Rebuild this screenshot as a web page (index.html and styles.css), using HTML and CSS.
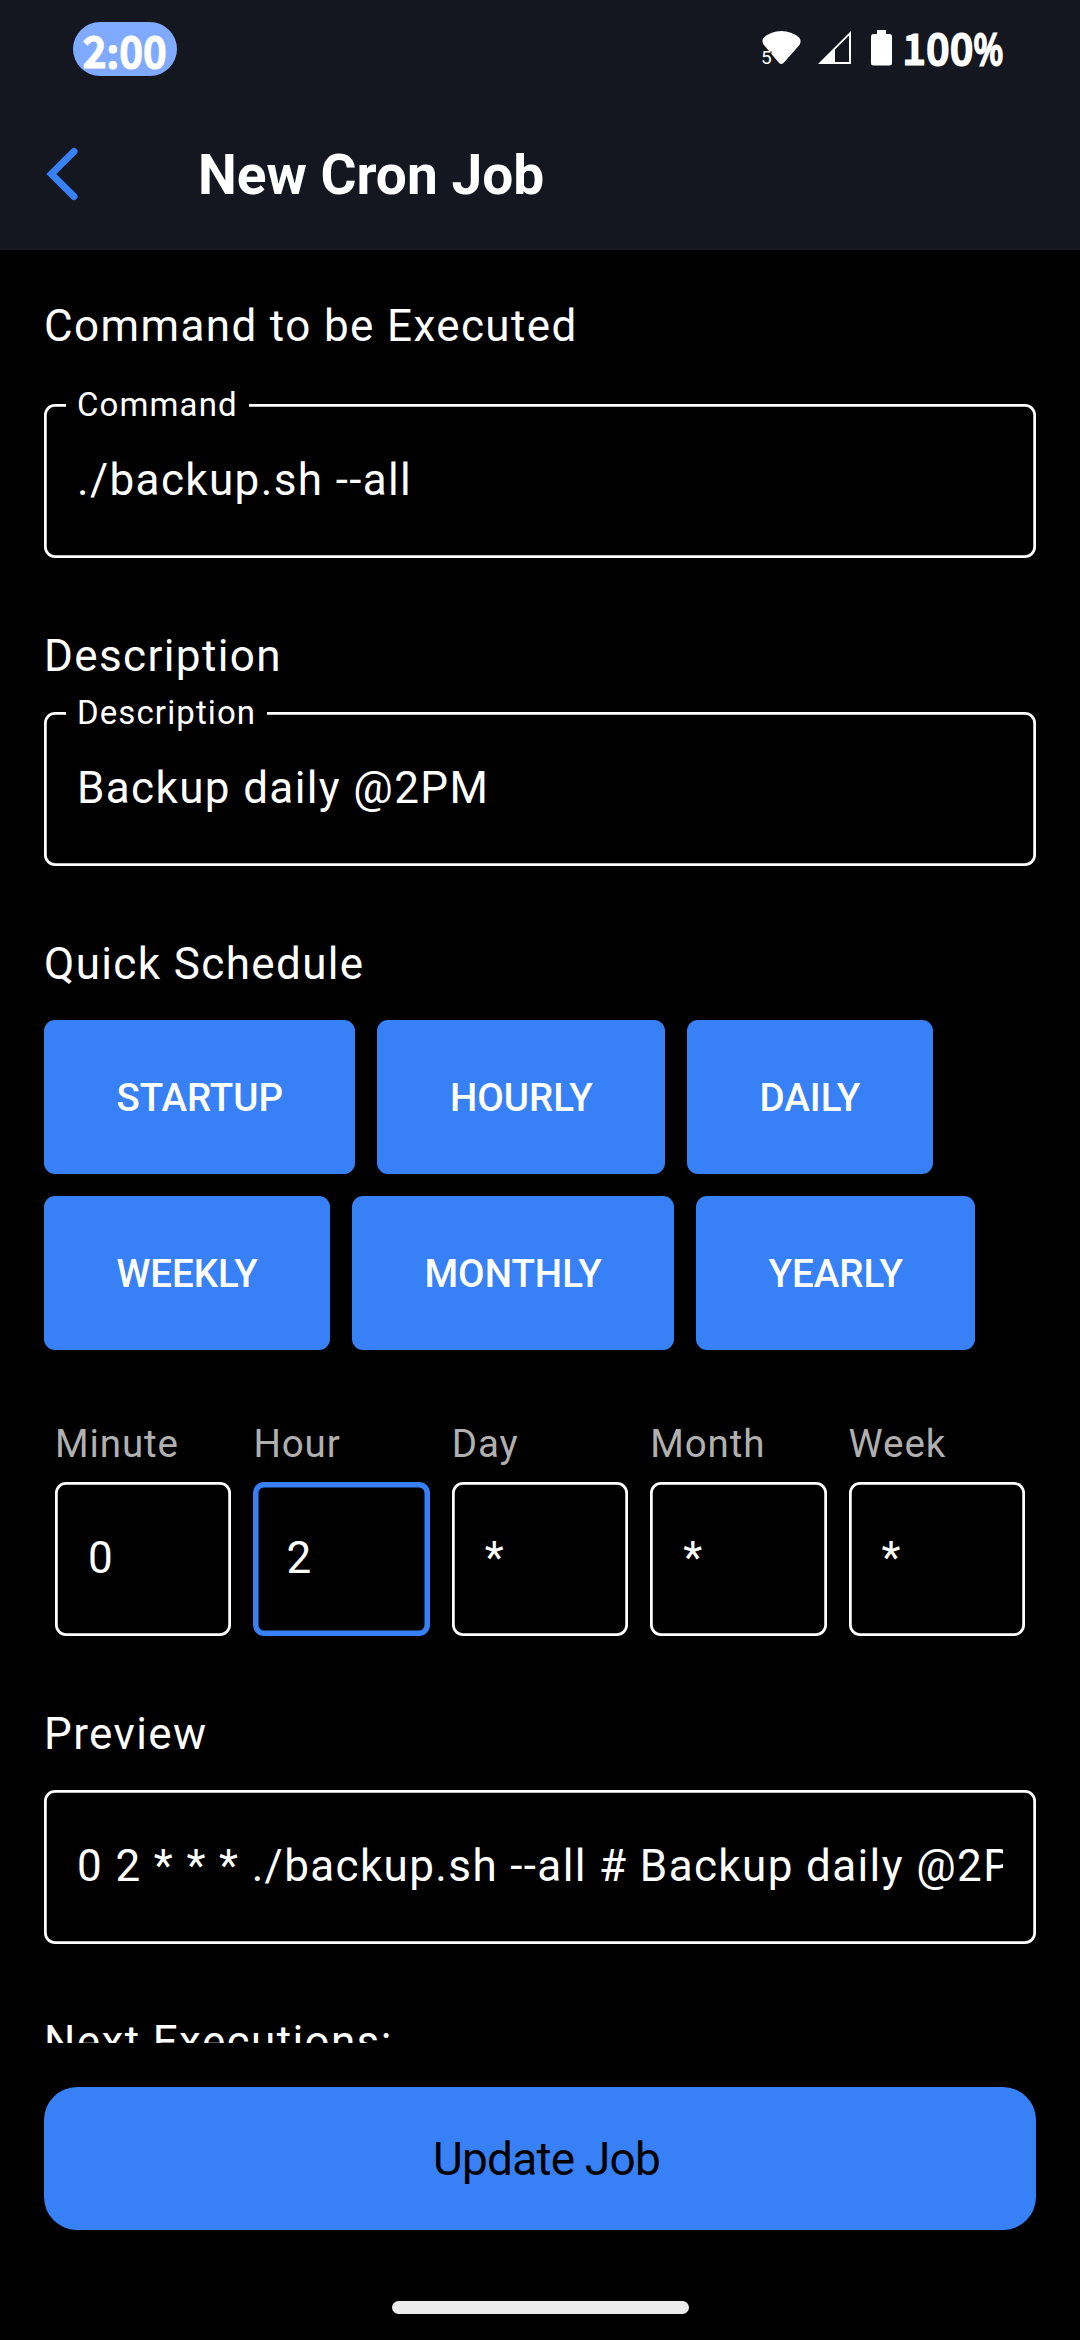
FILE: index.html
```html
<!DOCTYPE html>
<html lang="en">
<head>
<meta charset="utf-8">
<title>New Cron Job</title>
<link rel="stylesheet" href="styles.css">
</head>
<body>
<div class="screen">
  <header class="top">
    <div class="status">
      <div class="clock"><span>2:00</span></div>
      <div class="status-right">
        <svg class="wifi" width="40" height="36" viewBox="0 0 40 36">
          <path d="M1.500 12V10.500Q1.500 9 3 7.500Q10 1 20.300 1T38 7.500Q39.500 9 39.500 10.500V12Q39.200 14 38 15.500L22.500 33Q20.300 35 18.100 33L10.500 24V21H8L2.500 14.500Z" fill="#fff"/>
          <text class="wifi-gen" x="0" y="34">5</text>
        </svg>
        <svg class="signal" width="34" height="34" viewBox="0 0 34 34">
          <path d="M33 0V33H0Z M31 4.500L17 18.500V31H31Z" fill="#fff" fill-rule="evenodd"/>
        </svg>
        <svg class="battery" width="21" height="36" viewBox="0 0 21 36">
          <path d="M6 0H15V4H18.500Q21 4 21 6.500V33Q21 35.500 18.500 35.500H2.500Q0 35.500 0 33V6.500Q0 4 2.500 4H6Z" fill="#fff"/>
        </svg>
        <span class="percent">100<span class="sign">%</span></span>
      </div>
    </div>
    <div class="titlebar">
      <svg class="back" width="34" height="54" viewBox="0 0 34 54">
        <path d="M30 4.500L7.300 27L30 49.500" fill="none" stroke="#3880f6" stroke-width="7" stroke-linecap="round" stroke-linejoin="miter"/>
      </svg>
      <h1>New Cron Job</h1>
    </div>
  </header>

  <main class="content">
    <section class="group command">
      <h2>Command to be Executed</h2>
      <div class="field"><span class="legend">Command</span><div class="value">./backup.sh --all</div></div>
    </section>
    <section class="group description">
      <h2>Description</h2>
      <div class="field"><span class="legend">Description</span><div class="value">Backup daily @2PM</div></div>
    </section>
    <section class="group">
      <h2>Quick Schedule</h2>
      <div class="chips">
        <button>STARTUP</button><button>HOURLY</button><button>DAILY</button>
        <button>WEEKLY</button><button>MONTHLY</button><button>YEARLY</button>
      </div>
    </section>
    <section class="times">
      <label>Minute<span class="field"><span class="value">0</span></span></label>
      <label>Hour<span class="field focused"><span class="value">2</span></span></label>
      <label>Day<span class="field"><span class="value">*</span></span></label>
      <label>Month<span class="field"><span class="value">*</span></span></label>
      <label>Week<span class="field"><span class="value">*</span></span></label>
    </section>
    <section class="group preview">
      <h2>Preview</h2>
      <div class="field"><div class="value">0 2 * * * ./backup.sh --all # Backup daily @2PM</div></div>
    </section>
    <h2>Next Executions:</h2>
  </main>

  <footer>
    <button class="submit">Update Job</button>
    <div class="home"></div>
  </footer>
</div>
</body>
</html>
```
FILE: styles.css
```css
* { box-sizing: border-box; }
body { margin: 0; background: #000; font-family: Roboto, sans-serif; color: #fff; }
h1, h2 { margin: 0; }
button { border: 0; font-family: inherit; padding: 0; }
svg { display: block; flex: none; overflow: visible; }
.screen { width: 1080px; height: 2340px; display: flex; flex-direction: column; overflow: hidden; }

.top { height: 250px; background: #14171f; flex: none; }
.status { height: 96px; padding: 0 77px 0 73px; display: flex; justify-content: space-between; align-items: center; }
.clock { width: 104px; height: 54px; margin-top: 2px; border-radius: 27px; background: #80aaff; display: flex; align-items: center; justify-content: center; }
.clock span, .percent { font-family: "Noto Sans CJK JP", sans-serif; font-weight: 400; font-size: 40px; line-height: 54px; letter-spacing: 1.6px; -webkit-text-stroke: 3px #fff; white-space: nowrap; }
.clock > span { padding: 2px 0 0 1px; }
.status-right { display: flex; align-items: center; height: 54px; }
.signal { margin-left: 17px; }
.battery { margin-left: 19px; }
.percent { margin-left: 11px; width: 100px; display: flex; padding-bottom: 2px; }
.percent .sign { transform: scaleX(.78); transform-origin: left; }
.wifi-gen { font: 19px Roboto, sans-serif; fill: #fff; }
.titlebar { height: 156px; padding: 0 44px; display: flex; align-items: center; }
.titlebar h1 { margin-left: 120px; padding-top: 2px; font-size: 55px; line-height: 66px; font-weight: 700; }

.content { flex: none; height: 1793px; padding: 46px 44px 0; overflow: hidden; }
h2 { font-size: 44px; line-height: 60px; font-weight: 400; letter-spacing: 1.375px; white-space: nowrap; }
.group { display: flex; flex-direction: column; }
.field { position: relative; display: block; height: 154px; padding: 46px 33px 0; border-radius: 11px; box-shadow: inset 0 0 0 2.75px #fff; }
.focused { box-shadow: inset 0 0 0 5.5px #3880f6; }
.value { display: block; overflow: hidden; font-size: 44px; line-height: 60px; letter-spacing: 1.375px; white-space: pre; color: #fff; }
.legend { position: absolute; left: 22px; top: -19px; padding: 0 11px; background: #000; font-size: 33px; line-height: 40px; letter-spacing: 1.1px; }
.command { gap: 48px; margin-bottom: 68px; }
.description { gap: 26px; margin-bottom: 68px; }
.chips { margin-top: 26px; display: flex; flex-wrap: wrap; gap: 22px; }
.chips button { height: 154px; padding: 0 72.4px; border-radius: 11px; background: #3880f6; color: #fff; font-size: 38.5px; font-weight: 500; }
.times { margin-top: 68px; padding: 0 11px; display: grid; grid-template-columns: repeat(5, 1fr); column-gap: 22px; }
.times label { font-size: 38.5px; line-height: 52px; letter-spacing: .9px; color: #b0b0b0; }
.times .field { margin-top: 12px; }
.preview { gap: 26px; margin: 68px 0; }

footer { flex: 1; padding: 44px 44px 0; display: flex; flex-direction: column; align-items: center; }
.submit { width: 100%; height: 143px; padding-left: 13px; border-radius: 33px; background: #3880f6; color: #000; font-size: 46px; letter-spacing: -.8px; }
.home { width: 297px; height: 13px; margin-top: 71px; border-radius: 6.5px; background: #ececec; }
```
